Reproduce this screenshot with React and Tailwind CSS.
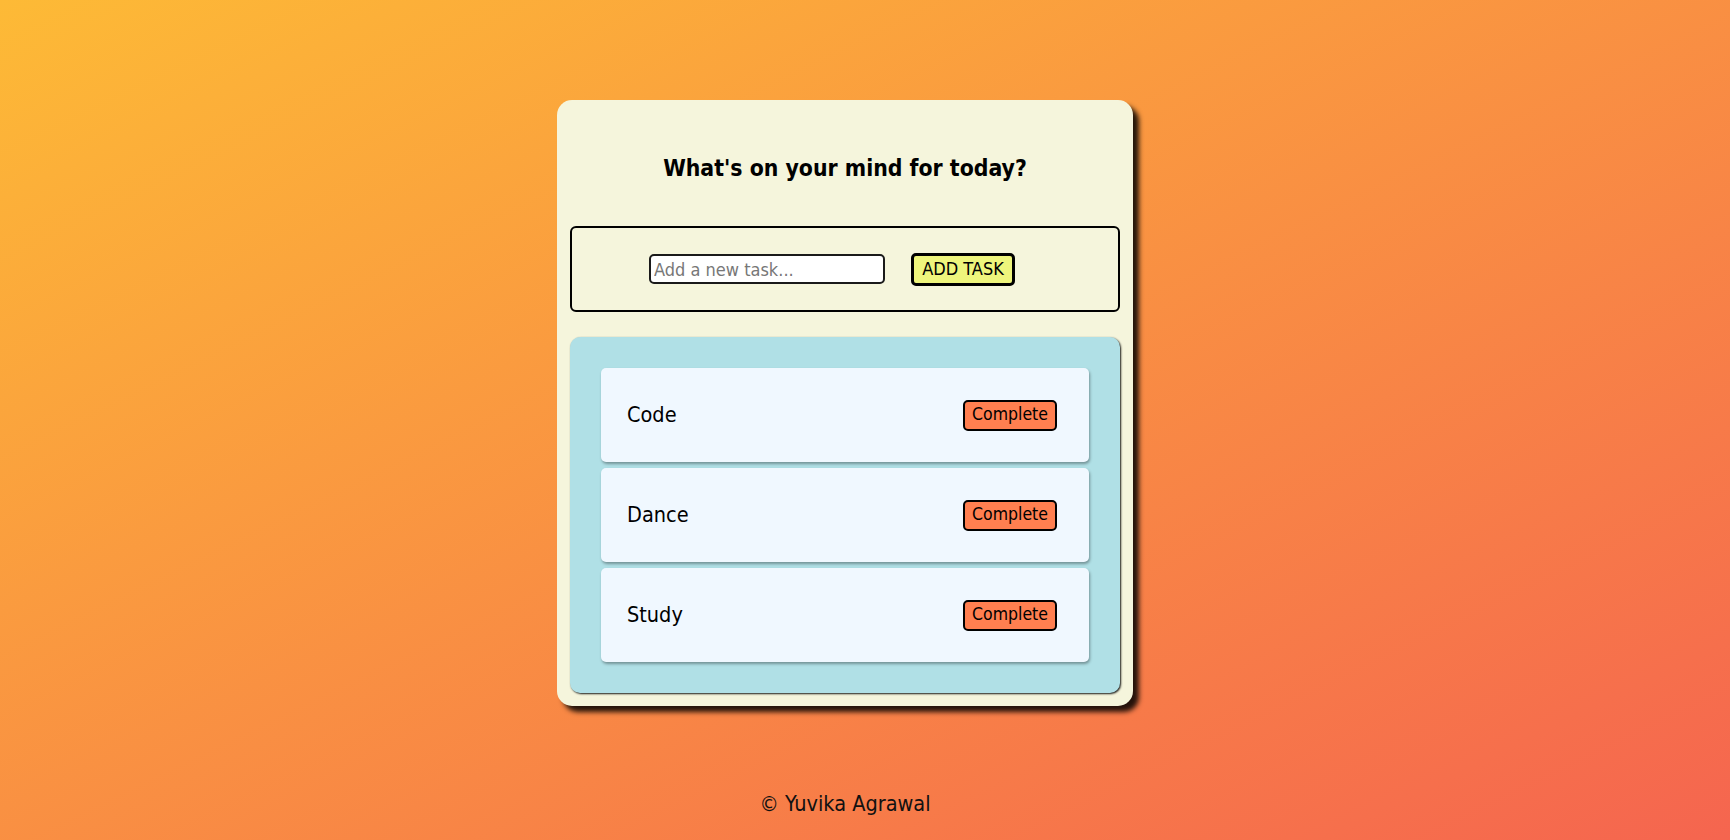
export default function App() {
  const tasks = ["Code", "Dance", "Study"];
  return (
    <div
      className="w-full h-[840px] flex flex-col items-center pr-[40px] bg-[linear-gradient(to_bottom_right,#fdba36,#f5654f)] text-black"
      style={{ fontFamily: '"DejaVu Sans Condensed", "DejaVu Sans", sans-serif' }}
    >
      <div className="mt-[100px] w-[576px] rounded-[15px] bg-[#f5f5dc] shadow-[6px_6px_5px_rgba(0,0,0,0.85)] px-[13px] pt-[54px] pb-[13px]">
        <h2 className="text-center font-bold text-[22.8px] leading-[28px]">
          What's on your mind for today?
        </h2>
        <div className="mt-[44px] h-[86px] border-2 border-black rounded-[6px] flex items-center justify-center gap-[26px] pr-[26px]">
          <input
            type="text"
            placeholder="Add a new task..."
            className="w-[236px] h-[30px] bg-white border-2 border-[#1a1a1a] rounded-[5px] pl-[3px] text-[18px] placeholder:text-[#777] outline-none"
          />
          <button className="w-[104px] h-[33px] bg-[#eef57c] border-[3px] border-black rounded-[5px] text-[18px] leading-none text-black">
            ADD TASK
          </button>
        </div>
        <div className="mt-[25px] bg-[#b0e0e6] rounded-[10px] shadow-[1px_1px_2px_rgba(0,0,0,0.9)] p-[31px] flex flex-col gap-[6px]">
          {tasks.map((t) => (
            <div
              key={t}
              className="h-[94px] bg-[#f0f8ff] rounded-[5px] shadow-[1px_2px_3px_rgba(0,0,0,0.35)] flex items-center justify-between pl-[26px] pr-[32px]"
            >
              <span className="text-[21.5px] leading-none">{t}</span>
              <button className="w-[94px] h-[31px] bg-[#ff7f50] border-2 border-black rounded-[5px] text-[17.5px] leading-none text-black">
                Complete
              </button>
            </div>
          ))}
        </div>
      </div>
      <div className="mt-[85px] text-[21.5px] leading-[25px] text-[#111]">© Yuvika Agrawal</div>
    </div>
  );
}
